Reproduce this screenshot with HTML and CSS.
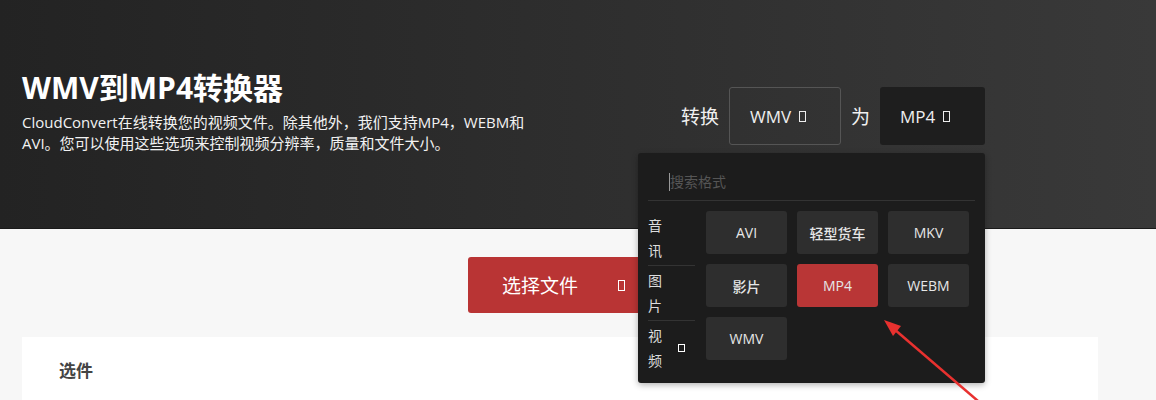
FILE: index.html
```html
<!DOCTYPE html>
<html lang="zh-CN">
<head>
    <meta charset="UTF-8">
    <meta name="viewport" content="width=device-width, initial-scale=1.0">
    <title>WMV到MP4转换器</title>
    <link rel="stylesheet" href="styles.css">
</head>
<body>
    <div class="hero">
        <div class="hero-text">
            <h1 class="hero-title">WMV到MP4转换器</h1>
            <p class="hero-desc">CloudConvert在线转换您的视频文件。除其他外，我们支持MP4，WEBM和<br>AVI。您可以使用这些选项来控制视频分辨率，质量和文件大小。</p>
        </div>
        <div class="convert">
            <span class="convert-label">转换</span>
            <div class="fmt-box fmt-from">WMV <span class="tofu"></span></div>
            <span class="convert-label">为</span>
            <div class="fmt-box fmt-to">MP4 <span class="tofu"></span></div>

            <div class="dropdown">
                <div class="dd-search"><span class="caret"></span>搜索格式</div>
                <div class="dd-body">
                    <div class="dd-side">
                        <div class="dd-cat"><span class="cat-name">音讯</span></div>
                        <div class="dd-cat"><span class="cat-name">图片</span></div>
                        <div class="dd-cat"><span class="cat-name">视频</span><span class="tofu tofu-sm"></span></div>
                    </div>
                    <div class="dd-grid">
                        <div class="dd-btn">AVI</div>
                        <div class="dd-btn">轻型货车</div>
                        <div class="dd-btn">MKV</div>
                        <div class="dd-btn">影片</div>
                        <div class="dd-btn dd-active">MP4</div>
                        <div class="dd-btn">WEBM</div>
                        <div class="dd-btn">WMV</div>
                    </div>
                </div>
            </div>
        </div>
    </div>

    <div class="main">
        <button class="btn-file" type="button">选择文件 <span class="tofu"></span></button>
        <div class="card">
            <h3 class="card-title">选件</h3>
        </div>
    </div>

    <svg class="annot" width="1156" height="400" viewBox="0 0 1156 400">
        <line x1="978" y1="401" x2="894" y2="329" stroke="#e8312f" stroke-width="2.5"/>
        <polygon points="884,320 901,326 893,336" fill="#e8312f"/>
    </svg>
</body>
</html>
```

FILE: styles.css
```css
body {
    margin: 0;
    background-color: #f7f7f7;
    font-family: "Open Sans", "Noto Sans CJK SC", sans-serif;
    position: relative;
    overflow: hidden;
    height: 400px;
}
.hero {
    height: 229px;
    box-sizing: border-box;
    padding: 70px 171px 0 22px;
    display: flex;
    justify-content: space-between;
    align-items: flex-start;
    background: linear-gradient(90deg, #232323, #393939);
    color: #fff;
    border-bottom: 1px solid #1a1a1a;
}
.hero-title {
    margin: 0;
    font-size: 30px;
    line-height: 36px;
    font-weight: 700;
}
.hero-desc {
    margin: 6px 0 0;
    font-size: 15px;
    line-height: 21px;
    color: #f2f2f2;
}
.convert {
    position: relative;
    display: flex;
    align-items: center;
    gap: 10px;
    margin-top: 17px;
}
.convert-label {
    font-size: 19px;
    color: #f0f0f0;
}
.fmt-box {
    height: 58px;
    box-sizing: border-box;
    padding-left: 20px;
    display: flex;
    align-items: center;
    gap: 8px;
    font-size: 17px;
    color: #eee;
    border-radius: 3px;
}
.fmt-from {
    width: 112px;
    border: 1px solid #555;
}
.fmt-to {
    width: 105px;
    background-color: #1e1e1e;
}
.tofu {
    display: inline-block;
    width: 7px;
    height: 11px;
    border: 1.5px solid currentColor;
    box-sizing: border-box;
}
.tofu-sm {
    width: 7px;
    height: 8px;
    border-width: 1px;
    margin-left: 14px;
}
.dropdown {
    position: absolute;
    top: 66px;
    right: 0;
    width: 347px;
    height: 230px;
    background-color: #1c1c1c;
    border-radius: 3px;
    box-shadow: 0 2px 6px rgba(0, 0, 0, 0.3);
    z-index: 10;
}
.dd-search {
    margin: 0 10px;
    height: 33px;
    padding: 14px 0 0 21px;
    border-bottom: 1px solid #333;
    font-size: 14px;
    line-height: 30px;
    color: #555;
    display: flex;
    align-items: flex-start;
}
.caret {
    width: 1px;
    height: 18px;
    margin-top: 6px;
    background-color: #999;
}
.dd-body {
    display: flex;
    padding: 10px 10px 0;
}
.dd-side {
    width: 47px;
    margin-right: 11px;
}
.dd-cat {
    height: 54px;
    display: flex;
    align-items: center;
    border-bottom: 1px solid #333;
}
.dd-cat:last-child {
    border-bottom: none;
}
.cat-name {
    width: 16px;
    font-size: 14px;
    line-height: 25px;
    color: #ddd;
}
.dd-grid {
    display: grid;
    grid-template-columns: repeat(3, 81px);
    grid-auto-rows: 43px;
    gap: 10px;
}
.dd-btn {
    display: flex;
    align-items: center;
    justify-content: center;
    background-color: #2e2e2e;
    border-radius: 3px;
    font-size: 14px;
    font-weight: 500;
    color: #e6e6e6;
}
.dd-active {
    background-color: #b93636;
}
.main {
    padding-top: 28px;
}
.btn-file {
    display: flex;
    align-items: center;
    gap: 40px;
    width: 220px;
    height: 56px;
    margin: 0 auto;
    padding: 0 0 0 34px;
    border: none;
    border-radius: 3px;
    background-color: #b93434;
    color: #fff;
    font-family: inherit;
    font-size: 19px;
    cursor: pointer;
}
.card {
    margin: 24px 58px 0 22px;
    padding: 20px 37px 0;
    box-sizing: border-box;
    height: 63px;
    background-color: #fff;
}
.card-title {
    margin: 0;
    font-size: 17px;
    font-weight: 700;
    color: #444;
}
.annot {
    position: absolute;
    top: 0;
    left: 0;
    pointer-events: none;
    z-index: 20;
}
```
